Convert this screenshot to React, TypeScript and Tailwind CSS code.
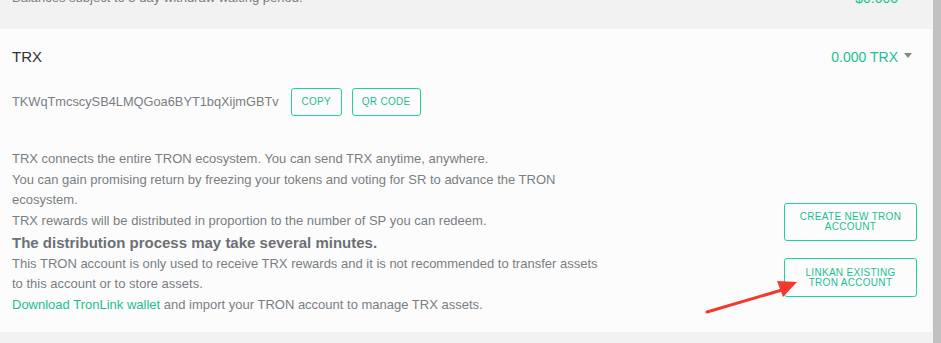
import React from 'react'

const green = 'text-[#1cbf91]'

const OutlineButton: React.FC<{ children: React.ReactNode; className?: string }> = ({
  children,
  className = '',
}) => {
  return (
    <button
      className={`border border-[#1dd2a6] rounded-[3px] bg-transparent text-[10px] leading-[10px] tracking-[0.3px] uppercase text-[#1cbf91] ${className}`}>
      {children}
    </button>
  )
}

const Caret = () => (
  <span className="inline-block ml-[6px] mb-[3px] w-0 h-0 border-l-[4px] border-r-[4px] border-t-[5px] border-l-transparent border-r-transparent border-t-[#888]" />
)

export default function App() {
  return (
    <div
      className="relative w-[941px] h-[343px] overflow-hidden bg-[#f2f2f2] flex"
      style={{ fontFamily: '"Liberation Sans", Arial, sans-serif' }}>
      <div className="flex-1 flex flex-col">
        {/* previous section, cut off at the top */}
        <div className="h-[29px] overflow-hidden px-[12px] pr-[20px]">
          <div className="-mt-[12px] flex justify-between items-center h-[20px]">
            <span className="text-[13px] text-[#7a7e83]">
              Balances subject to 3 day withdraw waiting period.
            </span>
            <span className={`text-[14px] ${green} flex items-center`}>
              $0.000
              <Caret />
            </span>
          </div>
        </div>

        {/* TRX card */}
        <div className="bg-[#fcfcfc] pl-[12px] pr-[15px] pt-[18px] pb-[17px]">
          <div className="flex justify-between items-center h-[20px] pr-[5px]">
            <span className="text-[15px] text-[#333]">TRX</span>
            <span className={`text-[14px] ${green} flex items-center`}>
              0.000 TRX
              <Caret />
            </span>
          </div>

          <div className="flex items-center mt-[21px] h-[28px]">
            <span className="text-[12.8px] text-[#7a7e83]">
              TKWqTmcscySB4LMQGoa6BYT1bqXijmGBTv
            </span>
            <OutlineButton className="ml-[12px] w-[51px] h-[28px]">Copy</OutlineButton>
            <OutlineButton className="ml-[10px] w-[69px] h-[28px]">QR Code</OutlineButton>
          </div>

          <div className="flex justify-between mt-[33px]">
            <div className="w-[592px] text-[13px] leading-[20.5px] text-[#7a7e83]">
              <p>TRX connects the entire TRON ecosystem. You can send TRX anytime, anywhere.</p>
              <p>
                You can gain promising return by freezing your tokens and voting for SR to
                advance the TRON ecosystem.
              </p>
              <p>TRX rewards will be distributed in proportion to the number of SP you can redeem.</p>
              <p className="mt-[2px] font-bold text-[15px] text-[#6c7075]">
                The distribution process may take several minutes.
              </p>
              <p>
                This TRON account is only used to receive TRX rewards and it is not recommended
                to transfer assets to this account or to store assets.
              </p>
              <p>
                <span className={green}>Download TronLink wallet</span> and import your TRON
                account to manage TRX assets.
              </p>
            </div>

            <div className="flex flex-col pt-[54px] gap-[17px]">
              <OutlineButton className="w-[133px] h-[38px]">
                Create new TRON
                <br />
                account
              </OutlineButton>
              <OutlineButton className="w-[133px] h-[39px]">
                Linkan existing
                <br />
                TRON account
              </OutlineButton>
            </div>
          </div>
        </div>
      </div>

      {/* scrollbar */}
      <div className="w-[8px] bg-[#c1c1c1] ml-[1px]" />

      {/* red annotation arrow */}
      <svg
        className="absolute left-0 top-0 pointer-events-none"
        width="941"
        height="343"
        viewBox="0 0 941 343">
        <line x1="707" y1="312" x2="782" y2="290" stroke="#f2392c" strokeWidth="3" strokeLinecap="round" />
        <polygon points="797,282 777,281 783,297" fill="#f2392c" />
      </svg>
    </div>
  )
}
